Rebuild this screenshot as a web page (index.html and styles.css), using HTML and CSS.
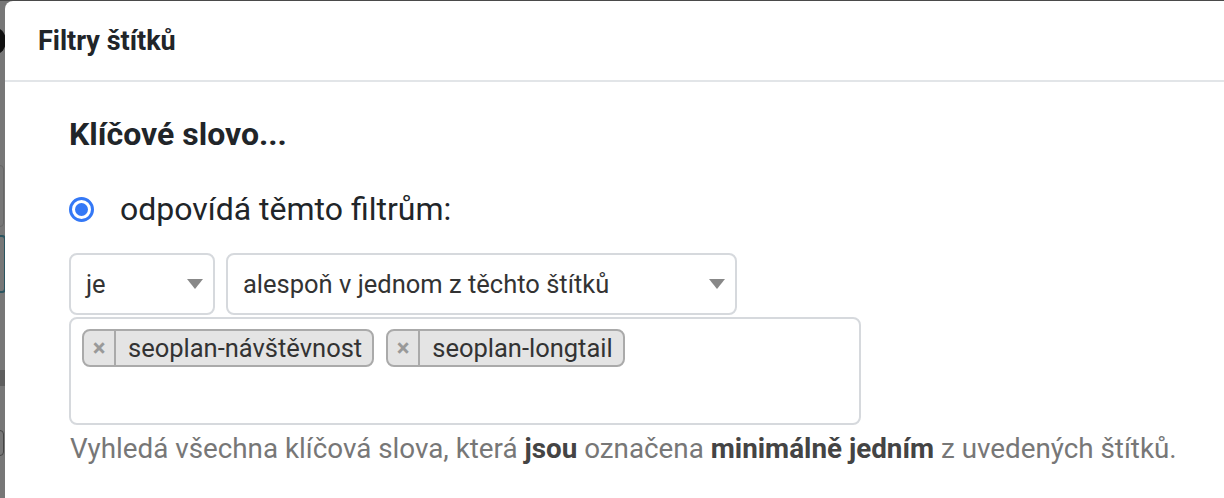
FILE: index.html
```html
<!DOCTYPE html>
<html lang="cs">
<head>
<meta charset="utf-8">
<link rel="stylesheet" href="styles.css">
</head>
<body>
<div class="backdrop">
  <div class="bd-top"></div>
  <div class="bd-shape bd-circle"></div>
  <div class="bd-shape bd-box1"></div>
  <div class="bd-shape bd-box2"></div>
  <div class="bd-shape bd-band"></div>
  <div class="bd-shape bd-box3"></div>
  <div class="modal">
    <div class="modal-header">Filtry štítků</div>
    <div class="modal-body">
      <div class="section-title">Klíčové slovo...</div>
      <label class="radio-row">
        <span class="radio"><span class="radio-dot"></span></span>
        <span class="radio-label">odpovídá těmto filtrům:</span>
      </label>
      <div class="select-row">
        <div class="select select-small"><span>je</span><span class="caret"></span></div>
        <div class="select select-large"><span>alespoň v jednom z těchto štítků</span><span class="caret"></span></div>
      </div>
      <div class="tag-box">
        <span class="tag"><span class="tag-x">×</span><span class="tag-text">seoplan-návštěvnost</span></span>
        <span class="tag"><span class="tag-x">×</span><span class="tag-text">seoplan-longtail</span></span>
      </div>
      <p class="help">Vyhledá všechna klíčová slova, která <b>jsou</b> označena <b>minimálně jedním</b> z uvedených štítků.</p>
    </div>
  </div>
</div>
</body>
</html>
```
FILE: styles.css
```css
html, body {
  margin: 0;
  padding: 0;
  height: 100%;
  overflow: hidden;
}
body {
  background: #777777;
  font-family: Roboto, "Liberation Sans", sans-serif;
  color: #212529;
}
.backdrop {
  position: relative;
  height: 498px;
  padding-top: 1px;
  box-sizing: border-box;
}
.bd-top {
  position: absolute;
  left: 0; right: 0; top: 0;
  height: 1px;
  background: #4a4a4a;
}
.bd-shape { position: absolute; }
.bd-circle {
  left: -14px; top: 28px;
  width: 20px; height: 26px;
  border-radius: 50%;
  background: #111;
}
.bd-box1 {
  left: -10px; top: 165px;
  width: 12px; height: 60px;
  border: 1px solid #666;
  border-radius: 4px;
}
.bd-box2 {
  left: -10px; top: 235px;
  width: 12px; height: 54px;
  border: 2px solid #2b5560;
  border-radius: 4px;
}
.bd-band {
  left: 0; top: 370px;
  width: 5px; height: 16px;
  background: #5e5e5e;
}
.bd-box3 {
  left: -10px; top: 430px;
  width: 12px; height: 24px;
  border: 1px solid #444;
  border-radius: 4px;
}
.modal {
  position: relative;
  margin-left: 5px;
  height: 497px;
  background: #fff;
  border-top-left-radius: 8px;
}
.modal-header {
  height: 79px;
  padding-left: 33px;
  display: flex;
  align-items: center;
  font-size: 27px;
  font-weight: 700;
  border-bottom: 2px solid #e2e5e8;
  box-sizing: content-box;
}
.modal-body {
  padding: 33px 0 0 64px;
}
.section-title {
  font-size: 32px;
  font-weight: 700;
  line-height: 38px;
}
.radio-row {
  display: flex;
  align-items: center;
  margin-top: 37px;
  height: 38px;
}
.radio {
  width: 19px;
  height: 19px;
  border: 3px solid #3478f6;
  border-radius: 50%;
  display: flex;
  align-items: center;
  justify-content: center;
}
.radio-dot {
  width: 13px;
  height: 13px;
  border-radius: 50%;
  background: #3478f6;
}
.radio-label {
  margin-left: 26px;
  font-size: 32px;
}
.select-row {
  display: flex;
  gap: 11px;
  margin-top: 25px;
}
.select {
  height: 58px;
  border: 2px solid #d6d9dd;
  border-radius: 8px;
  display: flex;
  align-items: center;
  justify-content: space-between;
  padding: 0 10px 0 15px;
  font-size: 25.5px;
  color: #333;
}
.select-small { width: 117px; }
.select-large { width: 482px; }
.caret {
  width: 0; height: 0;
  border-left: 8.5px solid transparent;
  border-right: 8.5px solid transparent;
  border-top: 10px solid #888;
}
.tag-box {
  width: 792px;
  height: 108px;
  border: 2px solid #d6d9dd;
  border-radius: 8px;
  margin-top: 2px;
  padding: 10px 0 0 11px;
  box-sizing: border-box;
  display: flex;
  align-items: flex-start;
  gap: 12px;
}
.tag {
  display: flex;
  align-items: center;
  height: 38px;
  box-sizing: border-box;
  background: #e4e4e4;
  border: 2px solid #aaa;
  border-radius: 8px;
}
.tag-x {
  width: 30px;
  height: 100%;
  display: flex;
  align-items: center;
  justify-content: center;
  border-right: 2px solid #aaa;
  color: #999;
  font-size: 24px;
  font-weight: 700;
}
.tag-text {
  padding: 0 10px 0 12px;
  font-size: 25.5px;
  color: #333;
}
.help {
  margin: 8px 0 0 1px;
  font-size: 27.8px;
  color: #777;
  line-height: 32px;
  white-space: nowrap;
}
.help b { color: #444; }
```
